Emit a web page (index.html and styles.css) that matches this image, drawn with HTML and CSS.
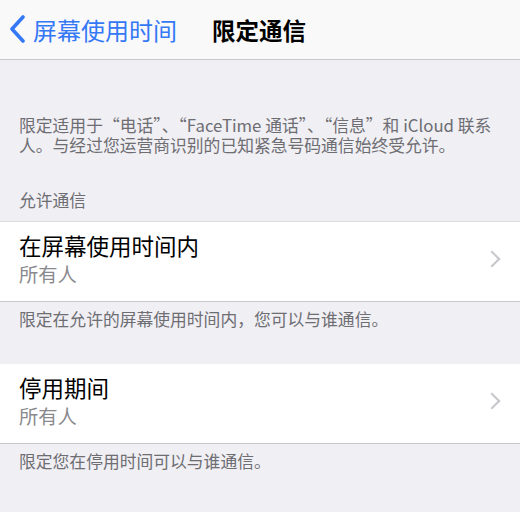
FILE: index.html
```html
<!DOCTYPE html>
<html lang="zh-cn">
<head>
    <meta charset="UTF-8">
    <meta name="viewport" content="width=device-width, initial-scale=1.0">
    <title>限定通信</title>
    <link rel="stylesheet" href="styles.css">
</head>
<body>
    <div class="navbar">
        <a class="back" href="#">
            <svg class="back-icon" width="18" height="28" viewBox="0 0 18 28">
                <path d="M14 2 L3 14 L14 26" fill="none" stroke="#3478f6" stroke-width="3.6" stroke-linecap="round" stroke-linejoin="round"/>
            </svg>
            <span>屏幕使用时间</span>
        </a>
        <div class="title">限定通信</div>
    </div>

    <p class="note intro">限定适用于“电话”、“FaceTime 通话”、“信息”和 iCloud 联系<br>人。与经过您运营商识别的已知紧急号码通信始终受允许。</p>

    <div class="section-header">允许通信</div>
    <div class="group">
        <div class="row">
            <div class="row-text">
                <div class="row-title">在屏幕使用时间内</div>
                <div class="row-value">所有人</div>
            </div>
            <span class="chevron"></span>
        </div>
    </div>
    <p class="note">限定在允许的屏幕使用时间内，您可以与谁通信。</p>

    <div class="group group-gap">
        <div class="row">
            <div class="row-text">
                <div class="row-title">停用期间</div>
                <div class="row-value">所有人</div>
            </div>
            <span class="chevron"></span>
        </div>
    </div>
    <p class="note">限定您在停用时间可以与谁通信。</p>
</body>
</html>
```

FILE: styles.css
```css
body {
    margin: 0;
    background-color: #f0eff4;
    font-family: "Noto Sans CJK SC", "Noto Sans", sans-serif;
    color: #000;
}
.navbar {
    height: 59px;
    background-color: #f9f9fa;
    border-bottom: 1px solid #c8c7cc;
    display: flex;
    align-items: center;
}
.back {
    display: flex;
    align-items: center;
    color: #3478f6;
    text-decoration: none;
    font-size: 24px;
    padding-left: 9px;
}
.back-icon {
    margin-right: 6px;
    margin-top: -1px;
}
.title {
    margin-left: 35px;
    font-size: 23.5px;
    font-weight: 600;
}
.note {
    margin: 0;
    padding: 7px 19px 0;
    font-size: 16.8px;
    line-height: 20px;
    color: #6d6d72;
}
.intro {
    padding-top: 55px;
}
.section-header {
    margin-top: 35px;
    padding: 0 19px;
    font-size: 16.8px;
    line-height: 20px;
    color: #6d6d72;
}
.group {
    margin-top: 11px;
    background-color: #fff;
    border-top: 1px solid #dcdbe0;
    border-bottom: 1px solid #c8c7cc;
}
.group-gap {
    margin-top: 34px;
    border-top-color: #f0eff4;
}
.row {
    display: flex;
    align-items: center;
    padding: 9px 18px 15px 19px;
}
.row-text {
    flex: 1;
}
.row-title {
    font-size: 22.5px;
    line-height: 28px;
}
.row-value {
    margin-top: 3px;
    font-size: 19.3px;
    line-height: 24px;
    color: #8a8a8e;
}
.chevron {
    width: 10px;
    height: 10px;
    border-top: 2.5px solid #c7c7cc;
    border-right: 2.5px solid #c7c7cc;
    transform: rotate(45deg);
    margin-right: 4px;
}
```
